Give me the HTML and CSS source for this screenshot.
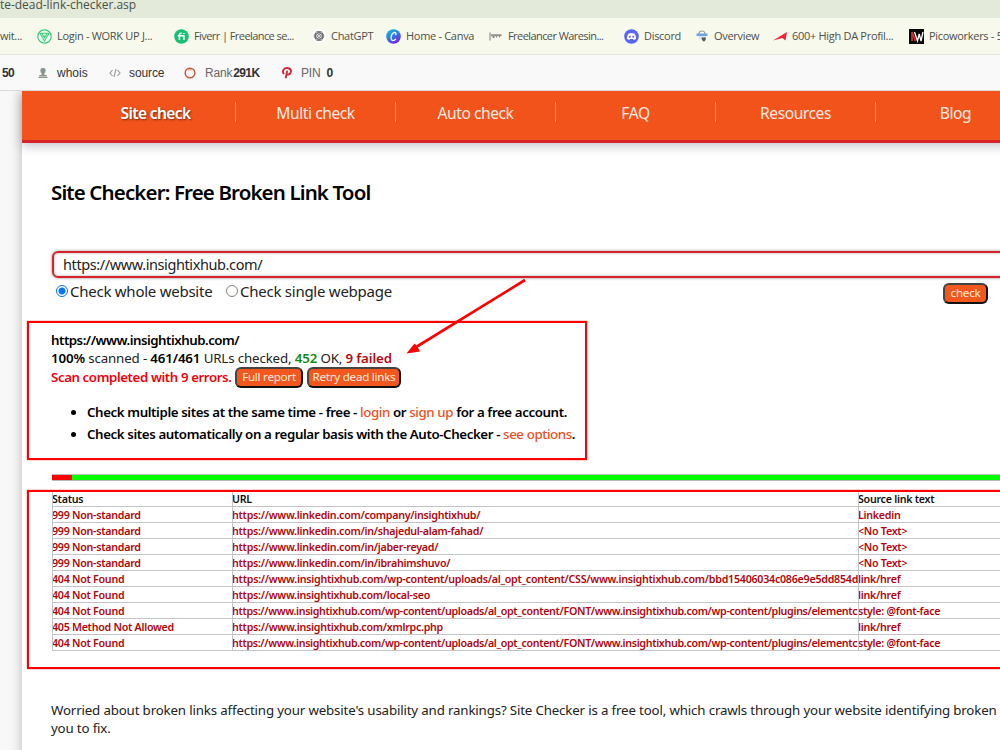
FILE: index.html
```
<!DOCTYPE html>
<html lang="en">
<head>
  <meta charset="UTF-8">
  <title>Site Checker: Free Broken Link Tool</title>
  <link rel="stylesheet" href="styles.css">
</head>
<body>

  <div class="address-bar">te-dead-link-checker.asp</div>

  <div class="bookmarks">
    <span class="bookmark">wit...</span>
    <span class="bookmark">
      <svg width="15" height="15" viewBox="0 0 15 15"><circle cx="7.5" cy="7.5" r="6.7" fill="#effcf3" stroke="#3fca79" stroke-width="1.2"/><path d="M3 4.2h9L7.5 12zM4.8 4.2l2.7 4.5 2.7-4.5M6 7h3" fill="none" stroke="#3fca79" stroke-width="1.1"/></svg>
      Login - WORK UP J...</span>
    <span class="bookmark tight">
      <svg width="15" height="15" viewBox="0 0 15 15"><circle cx="7.5" cy="7.5" r="7.3" fill="#1dbf73"/><path d="M5.4 11V6q0-2 2.3-1.8M3.8 6.7h6.1V11M9.9 4.1v1" fill="none" stroke="#fff" stroke-width="1.5"/></svg>
      Fiverr | Freelance se...</span>
    <span class="bookmark">
      <svg width="14" height="14" viewBox="0 0 14 14"><circle cx="7" cy="7" r="7" fill="#fff"/><g fill="none" stroke="#555" stroke-width=".8"><ellipse cx="7" cy="7" rx="4.8" ry="3"/><ellipse cx="7" cy="7" rx="4.8" ry="3" transform="rotate(60 7 7)"/><ellipse cx="7" cy="7" rx="4.8" ry="3" transform="rotate(120 7 7)"/><circle cx="7" cy="7" r="1.5"/></g></svg>
      ChatGPT</span>
    <span class="bookmark">
      <svg width="15" height="15" viewBox="0 0 15 15"><defs><linearGradient id="canva" x1="0" y1="0" x2=".6" y2="1"><stop offset="0" stop-color="#0fc5d0"/><stop offset=".5" stop-color="#2a83e3"/><stop offset="1" stop-color="#7424e5"/></linearGradient></defs><circle cx="7.5" cy="7.5" r="7.3" fill="url(#canva)"/><path d="M9.6 6.1c1-2-.3-3-1.7-2.4-3 1.2-4 7.6-.9 7.9 1.3 0 2.3-.7 2.9-1.7" fill="none" stroke="#fff" stroke-width="1.3"/></svg>
      Home - Canva</span>
    <span class="bookmark tight">
      <svg width="15" height="15" viewBox="0 0 15 15"><path d="M2 3.5v8" stroke="#b9bbb4" stroke-width="2"/><path d="M3 6.2h10.5M4.5 8h2M8 7.5h1M11 7.5h1" stroke="#8f928b" stroke-width="2" fill="none"/></svg>
      Freelancer Waresin...</span>
    <span class="bookmark">
      <svg width="15" height="15" viewBox="0 0 15 15"><circle cx="7.5" cy="7.5" r="7.3" fill="#5865f2"/><path d="M4.5 4.5q3-1 6 0 1.8 2.6 1.6 5.3-1 .9-2.4 1.1l-.6-.9H5.9l-.6.9q-1.400-.2-2.400-1.100-.2-2.700 1.600-5.300z" fill="#fff"/><circle cx="5.8" cy="7.8" r="1" fill="#5865f2"/><circle cx="9.2" cy="7.8" r="1" fill="#5865f2"/></svg>
      Discord</span>
    <span class="bookmark">
      <svg width="14" height="14" viewBox="0 0 14 14"><path d="M4 5Q4 2 7 2t3 3" fill="none" stroke="#9a9da0" stroke-width="1.2"/><path d="M1.5 4.5h11v2.5h-11z" fill="#6ea3e6"/><path d="M3.5 7h7v3.5h-7z" fill="#dce5ee"/><path d="M6.5 8.5h4.5l-.5 2.500-1.500 1.800L7 11z" fill="#55585c"/></svg>
      Overview</span>
    <span class="bookmark">
      <svg width="14" height="14" viewBox="0 0 14 14"><path d="M0 11.5L14 3l-1.5 8.5-3-2.5z" fill="#f5233c"/></svg>
      600+ High DA Profil...</span>
    <span class="bookmark">
      <svg width="15" height="15" viewBox="0 0 15 15"><path d="M0 0h15v15H0z" fill="#080808"/><path d="M3 12V3l3.5 9" fill="none" stroke="#e12a2a" stroke-width="1.7"/><path d="M5.5 3l3 9 1.7-7 1.8 7L14 3" fill="none" stroke="#fff" stroke-width="1.3"/></svg>
      Picoworkers - 5</span>
  </div>

  <div class="seo-bar">
    <span><b>50</b></span>
    <span>
      <svg width="10" height="10" viewBox="0 0 10 10"><path d="M5 0a2.6 2.6 0 0 1 2.6 2.8Q7.5 4.8 6.2 5.5V6.5L9 7.5V8.5H1V7.5l2.8-1v-1Q2.5 4.8 2.4 2.8A2.6 2.6 0 0 1 5 0zM.5 9h9v1h-9z" fill="#87958b"/></svg>
      whois</span>
    <span>
      <svg width="12" height="10" viewBox="0 0 12 10"><path d="M3.5 2L1 5l2.5 3M8.5 2L11 5 8.5 8M7 1L5 9" fill="none" stroke="#929b96" stroke-width="1.1"/></svg>
      source</span>
    <span>
      <svg width="12" height="12" viewBox="0 0 12 12"><circle cx="6" cy="6" r="4.8" fill="none" stroke="#c4573d" stroke-width="1.5"/><path d="M4 2.8h4" stroke="#e0a38f" stroke-width="1.3"/></svg>
      <i>Rank</i><b>291K</b></span>
    <span>
      <svg width="10" height="12" viewBox="0 0 10 12"><path d="M2 7Q0 5 1.5 2.7 3 .8 5.5 1q3.5.3 3.5 3.2Q8.6 7.6 6 7.7q-1.2 0-1.7-.9M5.3 3.6L3.6 11.2" fill="none" stroke="#cf2639" stroke-width="1.8"/></svg>
      <i>PIN</i><b class="count">0</b></span>
  </div>

  <div class="viewport">
    <div class="page">
      <nav class="menu">
        <a class="active">Site check</a>
        <a>Multi check</a>
        <a>Auto check</a>
        <a>FAQ</a>
        <a>Resources</a>
        <a>Blog</a>
      </nav>

      <main class="content">
        <h1>Site Checker: Free Broken Link Tool</h1>

        <div class="url-input">https://www.insightixhub.com/</div>
        <div class="options">
          <span class="radio checked"></span><label class="whole">Check whole website</label>
          <span class="radio"></span><label class="single">Check single webpage</label>
          <button class="btn check">check</button>
        </div>

        <section class="summary">
          <p><b class="site">https://www.insightixhub.com/</b></p>
          <p class="stats"><b>100%</b> scanned - <b>461/461</b> URLs checked, <b class="ok">452</b> OK, <b class="failed">9 failed</b></p>
          <p class="result"><b class="errors">Scan completed with 9 errors.</b>
            <button class="btn full">Full report</button>
            <button class="btn retry">Retry dead links</button></p>
          <ul>
            <li>Check multiple sites at the same time - free - <a>login</a> or <a>sign up</a> for a free account.</li>
            <li>Check sites automatically on a regular basis with the Auto-Checker - <a>see options</a>.</li>
          </ul>
        </section>

        <div class="progress"><div class="bad"></div></div>

        <table>
          <tr><th>Status</th><th>URL</th><th>Source link text</th></tr>
          <tr><td>999 Non-standard</td><td>https://www.linkedin.com/company/insightixhub/</td><td>Linkedin</td></tr>
          <tr><td>999 Non-standard</td><td>https://www.linkedin.com/in/shajedul-alam-fahad/</td><td>&lt;No Text&gt;</td></tr>
          <tr><td>999 Non-standard</td><td>https://www.linkedin.com/in/jaber-reyad/</td><td>&lt;No Text&gt;</td></tr>
          <tr><td>999 Non-standard</td><td>https://www.linkedin.com/in/ibrahimshuvo/</td><td>&lt;No Text&gt;</td></tr>
          <tr><td>404 Not Found</td><td class="css-url">https://www.insightixhub.com/wp-content/uploads/al_opt_content/CSS/www.insightixhub.com/bbd15406034c086e9e5dd854d</td><td>link/href</td></tr>
          <tr><td>404 Not Found</td><td>https://www.insightixhub.com/local-seo</td><td>link/href</td></tr>
          <tr><td>404 Not Found</td><td class="font-url">https://www.insightixhub.com/wp-content/uploads/al_opt_content/FONT/www.insightixhub.com/wp-content/plugins/elementc</td><td>style: @font-face</td></tr>
          <tr><td>405 Method Not Allowed</td><td>https://www.insightixhub.com/xmlrpc.php</td><td>link/href</td></tr>
          <tr><td>404 Not Found</td><td class="font-url">https://www.insightixhub.com/wp-content/uploads/al_opt_content/FONT/www.insightixhub.com/wp-content/plugins/elementc</td><td>style: @font-face</td></tr>
        </table>

        <p class="intro">Worried about broken links affecting your website's usability and rankings? Site Checker is a free tool, which crawls through your website identifying broken<br>you to fix.</p>
      </main>
    </div>
  </div>

  <!-- markup drawn over the page -->
  <div class="mark mark-summary"></div>
  <div class="mark mark-table"></div>
  <svg class="arrow" width="124" height="80" viewBox="0 0 124 80"><path d="M121 3L13 69.5" stroke="#f00" stroke-width="2.7"/><path d="M2.500 76.500l8-10 2.500 2.500 3 5.500z" fill="#f00"/></svg>

</body>
</html>
```
FILE: styles.css
```
* {
  box-sizing: border-box;
}

body {
  margin: 0;
  width: 1000px;
  height: 750px;
  overflow: hidden;
  position: relative;
  background: #fff;
  font-family: 'Noto Sans', sans-serif;
  color: #222;
  white-space: nowrap;
}

p, h1, ul {
  margin: 0;
}

/* browser chrome */
.address-bar {
  height: 18px;
  background: #e3ead9;
  color: #4b5148;
  font: 12px/9px 'Open Sans', sans-serif;
  letter-spacing: -0.03px;
}

.bookmarks {
  display: grid;
  grid-template-columns: 37px 137px 138px 74px 102px 136px 71px 78px 136px 1fr;
  height: 37px;
  background: #f8f9ed;
  border-bottom: 1px solid #e3e5da;
  color: #4d4f49;
  font: 11px/36px 'Open Sans', sans-serif;
  letter-spacing: -0.3px;
}

.bookmark {
  display: flex;
  align-items: center;
  gap: 5px;
}

.bookmark.tight {
  letter-spacing: -0.57px;
}

.seo-bar {
  display: grid;
  grid-template-columns: 38px 71px 75px 98px 1fr;
  height: 36px;
  background: #f9f9f9;
  border-bottom: 1px solid #dadada;
  color: #333;
  font: 12px/36px 'Liberation Sans', Arial, sans-serif;
}

.seo-bar span {
  display: flex;
  align-items: center;
  gap: 9px;
}

.seo-bar span:first-child {
  padding-left: 2px;
}

.seo-bar span:nth-child(3) {
  gap: 8px;
  letter-spacing: -0.1px;
}

.seo-bar b {
  letter-spacing: -0.6px;
}

.seo-bar i {
  font-style: normal;
  color: #666;
  margin-right: -8px;
  letter-spacing: -0.2px;
}

.seo-bar .count {
  margin-left: 5px;
}

/* page */
.viewport {
  height: 659px;
  padding-left: 22px;
  background: #f8f8f8;
  overflow: hidden;
}

.page {
  width: 1100px;
  height: 700px;
  background: #fff;
  box-shadow: 0 0 12px rgba(0, 0, 0, 0.25);
}

.menu {
  display: flex;
  height: 52px;
  padding: 11px 0 0 54px;
  background: #f2531b;
  border-bottom: 3px solid #d6252a;
  box-shadow: 0 3px 10px rgba(60, 50, 80, 0.3);
}

.menu a {
  width: 160px;
  height: 20px;
  flex: none;
  text-align: center;
  font-size: 15.6px;
  line-height: 22px;
  letter-spacing: -0.45px;
  color: #ffeae2;
  border-right: 1px solid #f78d68;
}

.menu .active {
  font-weight: 600;
  color: #fff;
  letter-spacing: -0.65px;
  text-shadow: 1px 1px 2px rgba(0, 0, 0, 0.5);
}

.content {
  padding: 34px 0 0 29px;
}

h1 {
  height: 74px;
  font-size: 20.5px;
  font-weight: 600;
  line-height: 30px;
  letter-spacing: -0.87px;
  color: #000;
}

.url-input {
  height: 27px;
  width: 1030px;
  margin-left: 1px;
  padding-left: 9px;
  border: 2.5px solid #d4252c;
  border-radius: 6px;
  box-shadow: 0 0 3px #888, inset 0 0 3px #aaa;
  font-size: 14.5px;
  line-height: 23px;
  letter-spacing: -0.4px;
}

.options {
  display: flex;
  align-items: center;
  height: 26px;
  padding-left: 5px;
  font-size: 15px;
  letter-spacing: -0.25px;
}

.radio {
  width: 12px;
  height: 12px;
  margin-right: 2px;
  border: 1px solid #858585;
  border-radius: 50%;
}

.radio.checked {
  border-color: #0b70e8;
  background: radial-gradient(circle, #0b74f0 3px, #fff 4px);
}

.whole {
  width: 156px;
}

.btn {
  height: 21px;
  padding: 0;
  border: 2px solid #111;
  border-top-color: #444;
  border-left-color: #444;
  border-radius: 6px;
  background: #f2581d;
  color: #ffebdf;
  font: 11.6px/16px 'Noto Sans', sans-serif;
  letter-spacing: -0.25px;
}

.check {
  width: 45px;
  margin: 4px 0 0 552px;
}

.single {
  width: 151px;
}

.summary {
  padding-top: 27px;
  height: 170px;
  font-size: 13.3px;
  line-height: 18px;
  letter-spacing: -0.35px;
}

.summary b {
  font-weight: 600;
  color: #000;
}

.summary .site {
  letter-spacing: -0.5px;
}

.stats {
  letter-spacing: -0.14px;
}

.summary .ok {
  color: #128a12;
}

.summary .failed {
  color: #b80c12;
}

.summary .errors {
  width: 184px;
  color: #f3000c;
  letter-spacing: -0.42px;
}

.result {
  display: flex;
  align-items: center;
  height: 20px;
}

.full {
  width: 68px;
  margin-right: 4px;
}

.retry {
  width: 94px;
}

.summary ul {
  padding: 14px 0 0 36px;
  font-weight: 600;
  line-height: 22px;
  letter-spacing: -0.4px;
  color: #000;
}

.summary li a {
  font-weight: 500;
  color: #f04e23;
}

.progress {
  height: 7px;
  margin-left: 1px;
  background: #0f0;
  border: 1px solid #bbb;
  border-width: 1px 0;
}

.bad {
  width: 20px;
  height: 5px;
  background: #f00;
}

table {
  width: 1030px;
  margin: 9px 0 0 1px;
  table-layout: fixed;
  border-collapse: collapse;
  font-size: 10.7px;
  line-height: 13px;
  letter-spacing: -0.28px;
}

th, td {
  height: 16px;
  padding: 2px 0 0;
  border: 1px solid #c4c4c4;
  text-align: left;
  text-indent: -1px;
  font-weight: 600;
  color: #b1060d;
  overflow: hidden;
}

td.css-url {
  letter-spacing: -0.26px;
}

td.font-url {
  letter-spacing: -0.34px;
}

th {
  padding-top: 3px;
  line-height: 12px;
  color: #111;
  border-top: 0;
}

th:nth-child(1) {
  width: 180px;
}

th:nth-child(2) {
  width: 626px;
}

.intro {
  margin-top: 50px;
  font-size: 13.3px;
  line-height: 18px;
  letter-spacing: -0.16px;
}

/* annotations */
.mark {
  position: absolute;
  left: 27px;
  border: 2px solid #f00;
  box-shadow: 0 0 1px #f00;
}

.mark-summary {
  top: 321px;
  width: 560px;
  height: 139px;
}

.mark-table {
  top: 490px;
  width: 1000px;
  height: 179px;
}

.arrow {
  position: absolute;
  left: 404px;
  top: 277px;
}
```
